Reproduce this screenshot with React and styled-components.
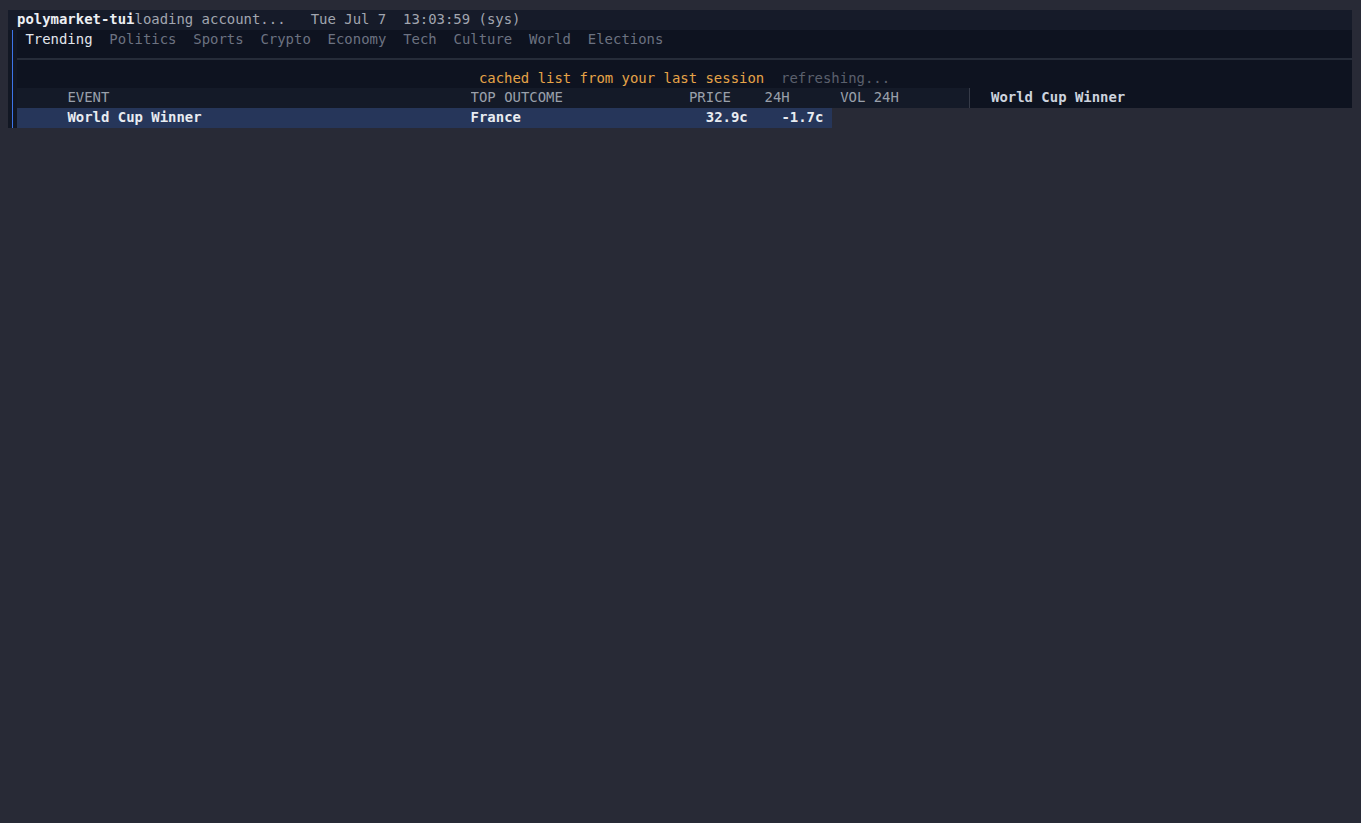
import React from "react"
import styled, { createGlobalStyle } from "styled-components"

const CH = 8.4
const ROW = 19.6
const cols = (n) => `${n * CH}px`

const GlobalStyle = createGlobalStyle`
  html, body {
    background: #282a36;
  }
  body {
    margin: 10px 8px 0;
    font-family: "DejaVu Sans Mono", "Liberation Mono", monospace;
    font-size: 13.95px;
    line-height: ${ROW}px;
    color: #e6e9ef;
  }
`

const tabs = [
  "Trending",
  "Politics",
  "Sports",
  "Crypto",
  "Economy",
  "Tech",
  "Culture",
  "World",
  "Elections",
]

const App = () => (
  <>
    <GlobalStyle />
    <Screen>
      <TitleBar>
        <AppName>polymarket-tui</AppName>
        <Muted>{"loading account...   Tue Jul 7  13:03:59 (sys)"}</Muted>
      </TitleBar>
      <Body>
        <Gutter />
        <Main>
          <TabRow>
            {tabs.map((t, i) => (
              <Tab key={t} active={i === 0}>
                {t}
              </Tab>
            ))}
          </TabRow>
          <SeparatorRow>
            <Rule />
          </SeparatorRow>
          <NoticeRow>
            <Cached>cached list from your last session</Cached>
            <Refreshing>refreshing...</Refreshing>
          </NoticeRow>
          <TableArea>
            <Table>
              <HeaderRow>
                <Cell w={6} />
                <Cell w={48}>EVENT</Cell>
                <Cell w={26}>TOP OUTCOME</Cell>
                <Cell w={7}>PRICE</Cell>
                <Cell w={2} />
                <Cell w={7}>24H</Cell>
                <Cell w={2} />
                <Cell w={15}>VOL 24H</Cell>
              </HeaderRow>
              <MarketRow selected>
                <Cell w={6} />
                <Cell w={48}>World Cup Winner</Cell>
                <Cell w={26}>France</Cell>
                <Cell w={7} align="right">
                  32.9c
                </Cell>
                <Cell w={2} />
                <Cell w={7} align="right">
                  -1.7c
                </Cell>
                <Cell w={1} />
              </MarketRow>
            </Table>
            <DetailPanel>
              <DetailTitle>World Cup Winner</DetailTitle>
            </DetailPanel>
          </TableArea>
        </Main>
      </Body>
    </Screen>
  </>
)

export default App

const Screen = styled.div`
  width: 1344px;
  display: flex;
  flex-direction: column;
`

const TitleBar = styled.div`
  height: ${ROW}px;
  background: #161b29;
  padding-left: 9px;
  white-space: pre;
  display: flex;
`

const AppName = styled.span`
  font-weight: bold;
  color: #eef0f4;
`

const Muted = styled.span`
  color: #a2a6b0;
`

const Body = styled.div`
  display: flex;
`

const Gutter = styled.div`
  width: 9px;
  flex-shrink: 0;
  background: linear-gradient(
    to right,
    #121723 4px,
    #3d74e8 4px,
    #3d74e8 5.5px,
    #121723 5.5px
  );
`

const Main = styled.div`
  flex: 1;
  display: flex;
  flex-direction: column;
`

const TabRow = styled.div`
  height: ${ROW}px;
  background: #0e1320;
  padding-left: ${CH}px;
  display: flex;
  gap: ${cols(2)};
`

const Tab = styled.span`
  color: ${(p) => (p.active ? "#e2e6ed" : "#6c7281")};
`

const SeparatorRow = styled.div`
  height: ${ROW}px;
  background: #0e1320;
  display: flex;
  align-items: center;
`

const Rule = styled.div`
  width: 100%;
  height: 2px;
  margin-top: 0px;
  background: #262c39;
`

const NoticeRow = styled.div`
  height: ${ROW}px;
  background: #0e1320;
  display: flex;
  justify-content: center;
  gap: ${cols(2)};
  white-space: pre;
`

const Cached = styled.span`
  color: #e6a448;
`

const Refreshing = styled.span`
  color: #5b606d;
`

const TableArea = styled.div`
  display: flex;
  align-items: flex-start;
`

const Table = styled.div`
  width: 952px;
  display: flex;
  flex-direction: column;
`

const HeaderRow = styled.div`
  height: ${ROW}px;
  display: flex;
  background: #141a28;
  color: #9aa0ab;
  white-space: pre;
`

const MarketRow = styled.div`
  height: ${ROW}px;
  display: flex;
  align-self: flex-start;
  background: ${(p) => (p.selected ? "#26365a" : "transparent")};
  color: #e9ecf1;
  font-weight: bold;
  white-space: pre;
`

const Cell = styled.span`
  width: ${(p) => cols(p.w)};
  flex-shrink: 0;
  text-align: ${(p) => p.align || "left"};
  overflow: hidden;
`

const DetailPanel = styled.div`
  flex: 1;
  height: ${ROW}px;
  background: #0e1320;
  border-left: 1px solid #363b48;
  padding-left: 21px;
`

const DetailTitle = styled.span`
  font-weight: bold;
  color: #cdd3de;
`
